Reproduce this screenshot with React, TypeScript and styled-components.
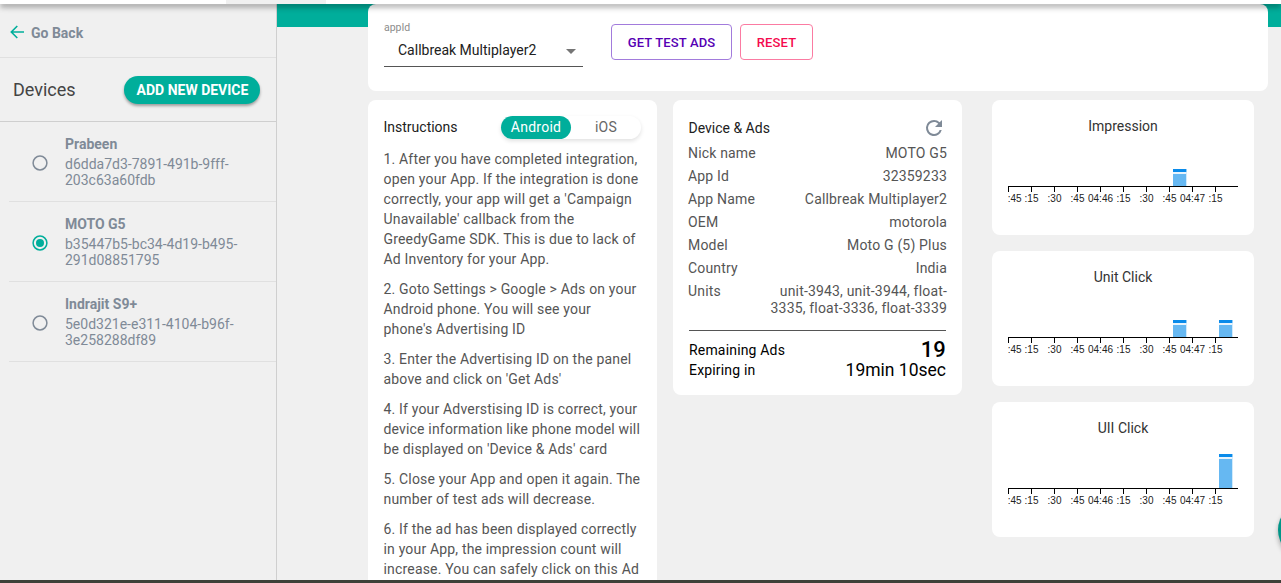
import React from "react";
import styled, { createGlobalStyle } from "styled-components";

const teal = "#00ae9b";
const slate = "#7f8a97";

const GlobalStyle = createGlobalStyle`
  * { box-sizing: border-box; }
  body { margin: 0; background: #f0f0f0; font-family: Roboto, "Liberation Sans", sans-serif; font-size: 14px; color: #212121; }
  button { font-family: inherit; cursor: pointer; }
  p, h2, h3 { margin: 0; font-weight: 400; }
`;

const Page = styled.div`
  display: flex;
  flex-direction: column;
  height: 583px;
  overflow: hidden;
`;

const TopBar = styled.header`
  position: relative;
  z-index: 2;
  flex: none;
  height: 4px;
  padding-left: 226px;
  background: #fff;
  box-shadow: 0 2px 4px -1px rgba(0, 0, 0, 0.3), 0 4px 5px 0 rgba(0, 0, 0, 0.18), 0 1px 10px 0 rgba(0, 0, 0, 0.16);
`;

const ActiveTab = styled.div`
  width: 100px;
  height: 4px;
  background: #f0f0f0;
`;

const BottomBar = styled.footer`
  flex: none;
  height: 3px;
  background: #3e4038;
`;

const Body = styled.div`
  display: flex;
  flex: 1;
  min-height: 0;
`;

const Sidebar = styled.aside`
  flex: none;
  width: 277px;
  border-right: 1px solid #cfcfcf;
`;

const BackLink = styled.div`
  display: flex;
  align-items: center;
  gap: 7px;
  height: 54px;
  padding: 4px 0 0 10px;
  border-bottom: 1px solid #e0e0e0;
  color: ${slate};
  font-weight: 700;

  svg {
    margin-top: -2px;
  }
`;

const SidebarHeader = styled.div`
  display: flex;
  align-items: center;
  justify-content: space-between;
  height: 64px;
  padding: 0 16px 0 13px;
  border-bottom: 1px solid #cfcfcf;
`;

const SidebarTitle = styled.h2`
  font-size: 18px;
  color: #444;
`;

const AddButton = styled.button`
  width: 136px;
  height: 28px;
  padding: 0 0 0 1px;
  border: 0;
  border-radius: 14px;
  background: ${teal};
  color: #fff;
  font-size: 14px;
  font-weight: 700;
  white-space: nowrap;
  box-shadow: 0 2px 3px rgba(0, 0, 0, 0.35);
`;

const DeviceList = styled.div`
  padding-left: 9px;
`;

const DeviceRow = styled.label`
  display: flex;
  align-items: center;
  gap: 17px;
  height: 80px;
  padding: 2px 0 0 23px;
  border-bottom: 1px solid #e0e0e0;
`;

const RadioIcon = styled.svg`
  flex: none;
  width: 16px;
  height: 16px;
`;

const DeviceText = styled.div`
  width: 185px;
  margin-top: -2px;
  color: ${slate};
  line-height: 16px;
`;

const DeviceName = styled.div`
  margin-bottom: 4px;
  font-weight: 700;
`;

const Main = styled.main`
  flex: 1;
  min-width: 0;
  padding-left: 91px;
  background: linear-gradient(${teal} 23px, #f0f0f0 23px);
`;

const Card = styled.section`
  border-radius: 8px;
  background: #fff;
`;

const Toolbar = styled(Card)`
  display: flex;
  align-items: flex-start;
  width: 900px;
  height: 87px;
  padding: 16px;
`;

const Field = styled.div`
  width: 199px;
  height: 47px;
  margin-right: 28px;
  border-bottom: 1px solid #555;
`;

const FieldLabel = styled.div`
  padding-top: 1px;
  font-size: 10.5px;
  line-height: 13px;
  color: #8c8c8c;
`;

const FieldValue = styled.div`
  display: flex;
  align-items: center;
  justify-content: space-between;
  height: 32px;
  padding: 0 7px 0 14px;
`;

const Caret = styled.span`
  margin-top: 2px;
  border: 5px solid transparent;
  border-top-color: #757575;
  border-bottom: 0;
`;

const OutlineButton = styled.button<{ $color: string; $line: string; $width: number }>`
  width: ${(p) => p.$width}px;
  height: 36px;
  margin: 4px 8px 0 0;
  padding: 0;
  border: 1px solid ${(p) => p.$line};
  border-radius: 4px;
  background: #fff;
  color: ${(p) => p.$color};
  font-size: 13px;
  font-weight: 500;
  letter-spacing: 0.15px;
`;

const Columns = styled.div`
  display: flex;
  align-items: flex-start;
  margin-top: 9px;
`;

const Instructions = styled(Card)`
  width: 289px;
  height: 520px;
  margin-right: 16px;
  padding: 15px 15px 0 15.5px;
`;

const InstructionsHead = styled.div`
  display: flex;
  align-items: center;
  justify-content: space-between;
  height: 24px;
  margin-bottom: 10px;
`;

const InstructionsTitle = styled.h3`
  font-size: 14px;
`;

const Segmented = styled.div`
  display: flex;
  width: 140px;
  height: 23px;
  margin: 1px 1px 0 0;
  border-radius: 12px;
  box-shadow: 0 2px 4px rgba(0, 0, 0, 0.12);
`;

const Segment = styled.div<{ $on?: boolean }>`
  width: 70px;
  border-radius: 12px;
  background: ${(p) => (p.$on ? teal : "transparent")};
  color: ${(p) => (p.$on ? "#fff" : "#666")};
  line-height: 22px;
  text-align: center;
  letter-spacing: 0.25px;
`;

const Step = styled.p`
  width: 258px;
  margin-bottom: 10px;
  color: #555;
  line-height: 20px;
  letter-spacing: 0.175px;
`;

const DeviceCard = styled(Card)`
  width: 289px;
  height: 295px;
  margin-right: 30px;
  padding: 16px 15px 0;
`;

const DeviceHead = styled.div`
  display: flex;
  align-items: center;
  justify-content: space-between;
  height: 24px;
  padding: 0 1px 0 0.5px;
  margin-bottom: 2px;
`;

const InfoRow = styled.div`
  display: flex;
  justify-content: space-between;
  padding: 3px 0;
  color: #555;
  line-height: 17px;
  letter-spacing: 0.175px;
`;

const InfoValue = styled.span`
  max-width: 180px;
  text-align: right;
`;

const Summary = styled.div`
  margin: 10px 1px 0;
  padding-top: 9px;
  border-top: 1px solid #555;
  color: #000;
  line-height: 20px;
  letter-spacing: 0.175px;
`;

const SummaryRow = styled.div`
  display: flex;
  align-items: center;
  justify-content: space-between;
  height: 20px;
`;

const Count = styled.strong`
  font-size: 22px;
  font-weight: 500;
`;

const Remaining = styled.span`
  margin-top: -1px;
  font-size: 17.5px;
  letter-spacing: 0;
`;

const Charts = styled.div`
  display: grid;
  gap: 16px;
`;

const ChartCard = styled(Card)`
  width: 262px;
  height: 135px;
  padding: 16px;
`;

const ChartTitle = styled.h3`
  height: 20px;
  line-height: 20px;
  font-size: 14px;
  color: #333;
  text-align: center;
`;

const ChartSvg = styled.svg`
  display: block;
  font-family: "Liberation Sans", sans-serif;
  font-size: 10px;
`;

const Fab = styled.div`
  position: absolute;
  left: 1278px;
  top: 502px;
  width: 56px;
  height: 56px;
  border-radius: 50%;
  background: #009688;
  box-shadow: 0 3px 5px rgba(0, 0, 0, 0.3);
`;

const Clip = styled.div`
  position: absolute;
  inset: 0 auto auto 0;
  width: 1281px;
  height: 580px;
  overflow: hidden;
  pointer-events: none;
`;

const devices = [
  { name: "Prabeen", id: "d6dda7d3-7891-491b-9fff-203c63a60fdb" },
  { name: "MOTO G5", id: "b35447b5-bc34-4d19-b495-291d08851795", on: true },
  { name: "Indrajit S9+", id: "5e0d321e-e311-4104-b96f-3e258288df89" },
];

const steps = [
  "1. After you have completed integration, open your App. If the integration is done correctly, your app will get a 'Campaign Unavailable' callback from the GreedyGame SDK. This is due to lack of Ad Inventory for your App.",
  "2. Goto Settings > Google > Ads on your Android phone. You will see your phone's Advertising ID",
  "3. Enter the Advertising ID on the panel above and click on 'Get Ads'",
  "4. If your Adverstising ID is correct, your device information like phone model will be displayed on 'Device & Ads' card",
  "5. Close your App and open it again. The number of test ads will decrease.",
  "6. If the ad has been displayed correctly in your App, the impression count will increase. You can safely click on this Ad",
];

const info = [
  ["Nick name", "MOTO G5"],
  ["App Id", "32359233"],
  ["App Name", "Callbreak Multiplayer2"],
  ["OEM", "motorola"],
  ["Model", "Moto G (5) Plus"],
  ["Country", "India"],
  ["Units", "unit-3943, unit-3944, float-3335, float-3336, float-3339"],
];

const ticks = [":45", ":15", ":30", ":45", "04:46", ":15", ":30", ":45", "04:47", ":15"];

type Bar = { x: number; height: number };

function Chart({ title, bars }: { title: string; bars: Bar[] }) {
  return (
    <ChartCard>
      <ChartTitle>{title}</ChartTitle>
      <ChartSvg width="230" height="76" viewBox="0 0 230 76">
        {bars.map((b) => (
          <g key={b.x}>
            <rect x={b.x} y={50 - b.height} width="13.3" height={b.height} fill="#66b8f2" />
            <rect x={b.x} y={50 - b.height} width="13.3" height="3" fill="#0a8bea" />
            <rect x={b.x} y={53 - b.height} width="13.3" height="2" fill="#e8f4fd" />
          </g>
        ))}
        <path d="M0 50.5H230" stroke="#000" />
        {ticks.map((t, i) => (
          <g key={i}>
            <path d={`M${i * 23 + 0.5} 50V56`} stroke="#000" />
            <text x={i === 0 ? 6.7 : i * 23 + 0.5} y="66" textAnchor="middle" fill="#222">
              {t}
            </text>
          </g>
        ))}
      </ChartSvg>
    </ChartCard>
  );
}

function Radio({ on }: { on?: boolean }) {
  const color = on ? teal : slate;
  return (
    <RadioIcon viewBox="0 0 16 16">
      <circle cx="8" cy="8" r="6.9" fill="none" stroke={color} strokeWidth="1.5" />
      {on && <circle cx="8" cy="8" r="4" fill={color} />}
    </RadioIcon>
  );
}

export default function App() {
  return (
    <>
      <GlobalStyle />
      <Page>
        <TopBar>
          <ActiveTab />
        </TopBar>
        <Body>
          <Sidebar>
            <BackLink>
              <svg width="14" height="14" viewBox="0 0 14 14" fill="none" stroke={teal} strokeWidth="1.6">
                <path d="M14 7H1.5M7.3 1L1.3 7l6 6" />
              </svg>
              Go Back
            </BackLink>
            <SidebarHeader>
              <SidebarTitle>Devices</SidebarTitle>
              <AddButton>ADD NEW DEVICE</AddButton>
            </SidebarHeader>
            <DeviceList>
              {devices.map((d) => (
                <DeviceRow key={d.id}>
                  <Radio on={d.on} />
                  <DeviceText>
                    <DeviceName>{d.name}</DeviceName>
                    {d.id}
                  </DeviceText>
                </DeviceRow>
              ))}
            </DeviceList>
          </Sidebar>
          <Main>
            <Toolbar>
              <Field>
                <FieldLabel>appId</FieldLabel>
                <FieldValue>
                  Callbreak Multiplayer2
                  <Caret />
                </FieldValue>
              </Field>
              <OutlineButton $color="#5600b4" $line="#a27bdc" $width={121}>
                GET TEST ADS
              </OutlineButton>
              <OutlineButton $color="#f50a4e" $line="#fb7ba2" $width={73}>
                RESET
              </OutlineButton>
            </Toolbar>
            <Columns>
              <Instructions>
                <InstructionsHead>
                  <InstructionsTitle>Instructions</InstructionsTitle>
                  <Segmented>
                    <Segment $on>Android</Segment>
                    <Segment>iOS</Segment>
                  </Segmented>
                </InstructionsHead>
                {steps.map((s) => (
                  <Step key={s}>{s}</Step>
                ))}
              </Instructions>
              <DeviceCard>
                <DeviceHead>
                  <span>Device &amp; Ads</span>
                  <svg width="24" height="24" viewBox="0 0 24 24" fill={slate}>
                    <path d="M17.65 6.35A7.96 7.96 0 0 0 12 4a8 8 0 1 0 7.73 10h-2.08A6 6 0 1 1 12 6c1.66 0 3.14.69 4.22 1.78L13 11h7V4z" />
                  </svg>
                </DeviceHead>
                {info.map(([k, v]) => (
                  <InfoRow key={k}>
                    <span>{k}</span>
                    <InfoValue>{v}</InfoValue>
                  </InfoRow>
                ))}
                <Summary>
                  <SummaryRow>
                    <span>Remaining Ads</span>
                    <Count>19</Count>
                  </SummaryRow>
                  <SummaryRow>
                    <span>Expiring in</span>
                    <Remaining>19min 10sec</Remaining>
                  </SummaryRow>
                </Summary>
              </DeviceCard>
              <Charts>
                <Chart title="Impression" bars={[{ x: 165, height: 17 }]} />
                <Chart title="Unit Click" bars={[{ x: 165, height: 17 }, { x: 211, height: 17 }]} />
                <Chart title="UII Click" bars={[{ x: 211, height: 34 }]} />
              </Charts>
            </Columns>
          </Main>
        </Body>
        <BottomBar />
        <Clip>
          <Fab />
        </Clip>
      </Page>
    </>
  );
}
